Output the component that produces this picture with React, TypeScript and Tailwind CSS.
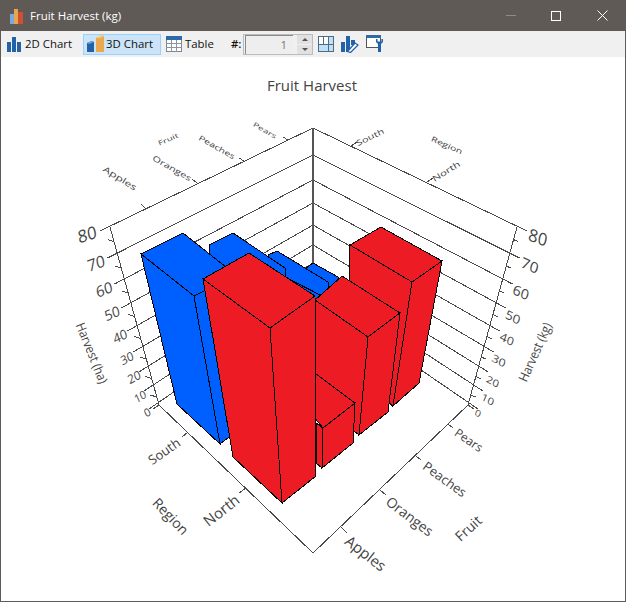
import React from "react";

const font = '"Open Sans", "Noto Sans", sans-serif';

// y of each value (0..80) on the back corner and on the front edges of the walls
const backY = [296, 280, 263, 245, 225, 203, 180, 155, 128];
const sideY = [405, 387, 368, 348, 327, 304, 280, 254, 227];
const leftX = (y: number) => 110 + ((y - 227) * 49) / 178;
const rightX = (y: number) => 517 - ((y - 227) * 49) / 178;

interface Label {
  text: string;
  x: number;
  y: number;
  rotate: number;
  size: number;
  scaleX?: number;
  scaleY?: number;
  skew?: number;
}

const chartLabels: Label[] = [
  // left values
  { text: "80", x: 87, y: 234, rotate: -18, size: 17, skew: -8 },
  { text: "70", x: 96, y: 263, rotate: -20, size: 16, skew: -8 },
  { text: "60", x: 104, y: 289, rotate: -22, size: 15, skew: -8 },
  { text: "50", x: 112, y: 313, rotate: -24, size: 14, skew: -8 },
  { text: "40", x: 120, y: 336, rotate: -26, size: 13, skew: -8 },
  { text: "30", x: 127, y: 358, rotate: -28, size: 12, skew: -8 },
  { text: "20", x: 134, y: 377, rotate: -30, size: 12, skew: -8 },
  { text: "10", x: 140, y: 396, rotate: -32, size: 11, skew: -8 },
  { text: "0", x: 147, y: 412, rotate: -35, size: 11, skew: -8 },
  // right values
  { text: "80", x: 538, y: 237, rotate: 20, size: 17, skew: 8 },
  { text: "70", x: 530, y: 265, rotate: 24, size: 16, skew: 8, scaleY: 0.9 },
  { text: "60", x: 521, y: 292, rotate: 25, size: 15, skew: 8, scaleY: 0.9 },
  { text: "50", x: 513, y: 317, rotate: 26, size: 14, skew: 8, scaleY: 0.85 },
  { text: "40", x: 507, y: 339, rotate: 27, size: 13, skew: 8, scaleY: 0.85 },
  { text: "30", x: 499, y: 360, rotate: 28, size: 13, skew: 8, scaleY: 0.8 },
  { text: "20", x: 493, y: 381, rotate: 29, size: 12, skew: 8, scaleY: 0.8 },
  { text: "10", x: 488, y: 399, rotate: 30, size: 12, skew: 8, scaleY: 0.8 },
  { text: "0", x: 478, y: 413, rotate: 32, size: 11, skew: 8, scaleY: 0.8 },
  // wall titles
  { text: "Harvest (ha)", x: 92, y: 353, rotate: 68, size: 13, scaleX: 0.88 },
  { text: "Harvest (kg)", x: 535, y: 352, rotate: -66, size: 13, scaleX: 0.88 },
  // floor
  { text: "South", x: 164, y: 451, rotate: -35, size: 13 },
  { text: "North", x: 221, y: 510, rotate: -38, size: 15 },
  { text: "Region", x: 171, y: 516, rotate: 46, size: 14 },
  { text: "Pears", x: 469, y: 440, rotate: 35, size: 12 },
  { text: "Peaches", x: 445, y: 479, rotate: 36, size: 13 },
  { text: "Oranges", x: 410, y: 516, rotate: 37, size: 14 },
  { text: "Apples", x: 366, y: 553, rotate: 38, size: 15 },
  { text: "Fruit", x: 468, y: 528, rotate: -42, size: 14 },
  // far side of the floor
  { text: "Apples", x: 120, y: 178, rotate: 32, size: 12, scaleY: 0.7 },
  { text: "Oranges", x: 172, y: 168, rotate: 30, size: 11, scaleY: 0.7 },
  { text: "Fruit", x: 168, y: 139, rotate: -24, size: 10, scaleY: 0.65 },
  { text: "Peaches", x: 217, y: 147, rotate: 30, size: 10.5, scaleY: 0.7 },
  { text: "Pears", x: 265, y: 130, rotate: 30, size: 10, scaleY: 0.65 },
  { text: "South", x: 370, y: 137, rotate: -26, size: 11, scaleY: 0.7 },
  { text: "Region", x: 447, y: 145, rotate: 24, size: 10.5, scaleY: 0.7 },
  { text: "North", x: 446, y: 171, rotate: -32, size: 11.5, scaleY: 0.7 },
];

const ticks = [
  [145, 208, 141, 204], [197, 183, 192, 179], [244, 161, 239, 158], [288, 140, 283, 137],
  [351, 146, 357, 142], [427, 182, 433, 178],
  [188, 432, 182, 437], [246, 488, 239, 493],
  [448, 424, 453, 428], [416, 456, 421, 460], [380, 490, 386, 495], [341, 527, 347, 533],
  [468, 405, 474, 409], [159, 405, 153, 409],
];

// each bar: visible faces, painted back to front
const blueBars = [
  ["306,268 313,263 338,277 338,300 306,300"],
  ["268,255 277,251 328,282 328,300 268,300"],
  ["209,245 233,233 285,268 285,277 330,300 240,320 209,280"],
  ["141,254 183,233 236,275 194,296", "141,254 194,296 220,444 177,404", "194,296 236,275 252,420 220,444"],
];

const redBars = [
  ["350,245 381,227 442,261 412,282", "350,245 412,282 393,406 389,403 349,330", "412,282 442,261 419,383 393,406"],
  ["315,300 342,276 400,313 368,337", "315,300 368,337 359,435 316,400", "368,337 400,313 388,412 359,435"],
  ["300,400 315,373 355,403 323,428", "316,423 323,428 322,468 316,463", "323,428 355,403 353,443 322,468"],
  ["203,279 249,253 315,296 270,328", "203,279 270,328 282,503 233,457", "270,328 315,296 316,476 282,503"],
];

const Chart = () => {
  return (
    <svg width="624" height="544" viewBox="1 57 624 544" className="block">
      <text x="312" y="91" textAnchor="middle" fontSize="15" fill="#444" fontFamily={font}>
        Fruit Harvest
      </text>

      {/* walls */}
      <g stroke="#4a4a4a" strokeWidth="1" fill="none" shapeRendering="crispEdges">
        {sideY.map((y, i) => (
          <g key={i}>
            <line x1="313" y1={backY[i]} x2={leftX(y) - 10} y2={y + 4} />
            <line x1="313" y1={backY[i]} x2={rightX(y) + 10} y2={y + 4} />
          </g>
        ))}
        {sideY.slice(0, -1).map((y, i) => {
          const mid = (y + sideY[i + 1]) / 2;
          return (
            <g key={i}>
              <line x1={leftX(mid) - 6} y1={mid - 1} x2={leftX(mid)} y2={mid + 1} />
              <line x1={rightX(mid)} y1={mid - 1} x2={rightX(mid) + 5} y2={mid + 1} />
            </g>
          );
        })}
        <line x1="110" y1="227" x2="159" y2="405" />
        <line x1="517" y1="227" x2="468" y2="405" />
        <line x1="159" y1="405" x2="313" y2="553" />
        <line x1="468" y1="405" x2="313" y2="553" />
        {ticks.map(([x1, y1, x2, y2], i) => (
          <line key={i} x1={x1} y1={y1} x2={x2} y2={y2} />
        ))}
      </g>
      <line x1="313" y1="128" x2="313" y2="296" stroke="#555" strokeWidth="2" />

      {/* bars */}
      <g stroke="#000" strokeWidth="1" shapeRendering="crispEdges">
        {blueBars.map((faces, i) => (
          <g key={i} fill="#0060ff">
            {faces.map((p) => (
              <polygon key={p} points={p} />
            ))}
          </g>
        ))}
        {redBars.map((faces, i) => (
          <g key={i} fill="#ed1c24">
            {faces.map((p) => (
              <polygon key={p} points={p} />
            ))}
          </g>
        ))}
      </g>

      {/* axis text */}
      {chartLabels.map((l, i) => (
        <text
          key={i}
          textAnchor="middle"
          dominantBaseline="central"
          fontSize={l.size}
          fill="#444"
          fontFamily={font}
          transform={`translate(${l.x} ${l.y}) rotate(${l.rotate}) skewX(${l.skew ?? 0}) scale(${l.scaleX ?? 1} ${l.scaleY ?? 1})`}
        >
          {l.text}
        </text>
      ))}
    </svg>
  );
};

const AppIcon = () => (
  <svg width="16" height="16" viewBox="0 0 16 16" className="mr-[6px] ml-[8px]">
    <rect x="2" y="6" width="4" height="10" fill="#7ba7dc" />
    <rect x="6" y="1" width="4" height="15" fill="#e6a74c" />
    <rect x="10" y="4" width="5" height="12" fill="#cf4f33" />
  </svg>
);

const Icon2D = () => (
  <svg width="16" height="16" viewBox="0 0 16 16">
    <rect x="0" y="6" width="4" height="10" fill="#2162a8" />
    <rect x="5" y="1" width="4" height="15" fill="#2162a8" />
    <rect x="10" y="6" width="4" height="10" fill="#2162a8" />
  </svg>
);

const Icon3D = () => (
  <svg width="18" height="18" viewBox="0 0 18 18">
    <polygon points="0,8 5,6 7,7 7,17 0,17" fill="#2162a8" />
    <polygon points="0,8 5,6 7,7 2,9" fill="#6fa3d8" />
    <polygon points="9,3 14,0 17,1 17,17 9,17" fill="#eba94e" />
    <polygon points="9,3 14,0 17,1 13,3" fill="#f4cf93" />
  </svg>
);

const IconTable = () => (
  <svg width="16" height="16" viewBox="0 0 16 16">
    <rect x="0.5" y="0.5" width="15" height="15" fill="#fff" stroke="#7b8794" />
    <rect x="0" y="0" width="16" height="4" fill="#2f6aa8" />
    <path d="M5.5 4v12M10.5 4v12M0 7.5h16M0 11.5h16" stroke="#8c949c" fill="none" />
  </svg>
);

const IconGrid = () => (
  <svg width="16" height="16" viewBox="0 0 16 16">
    <rect x="0.5" y="0.5" width="15" height="15" fill="#fff" stroke="#4d6b85" />
    <rect x="1" y="8" width="14" height="7" fill="#bfe0f5" />
    <rect x="10" y="1" width="5" height="7" fill="#bfe0f5" />
    <path d="M5.5 1v7M10.5 1v14M1 8.5h14" stroke="#4d6b85" fill="none" />
  </svg>
);

const IconEdit = () => (
  <svg width="18" height="18" viewBox="0 0 18 18">
    <rect x="0" y="7" width="4" height="10" fill="#2162a8" />
    <rect x="5" y="1" width="4" height="16" fill="#2162a8" />
    <rect x="10" y="5" width="4" height="5" fill="#2162a8" />
    <path d="M6.5 16.5 L14 8 L17 10 L9.5 17.5 Z" fill="#fff" stroke="#2162a8" strokeWidth="1.3" />
  </svg>
);

const IconSettings = () => (
  <svg width="18" height="18" viewBox="0 0 18 18">
    <rect x="0.5" y="0.5" width="14" height="12" fill="#fff" stroke="#555" />
    <rect x="0" y="0" width="15" height="3" fill="#2f6aa8" />
    <path d="M10 4 v3 l2 2 v8 h3 v-8 l2 -2 V4 h-1.5 v2.5 h-4 V4 Z" fill="#2162a8" />
  </svg>
);

const Toolbar = () => (
  <div className="h-[26px] bg-[#f0f0f0] flex items-center text-[11.4px] text-[#111]">
    <div className="flex items-center gap-[2px] ml-[6px] w-[76px] shrink-0">
      <Icon2D />
      <span>2D Chart</span>
    </div>
    <div className="flex items-center gap-px w-[78px] h-[21px] pl-[3px] shrink-0 bg-[#cce4f7] border border-[#99d1ff]">
      <Icon3D />
      <span>3D Chart</span>
    </div>
    <div className="flex items-center gap-[3px] ml-[5px] w-[65px] shrink-0">
      <IconTable />
      <span>Table</span>
    </div>
    <span className="font-semibold w-[12px] shrink-0">#:</span>
    <div className="flex items-center h-[21px] w-[70px] shrink-0 border border-[#bcbcbc] bg-[#f0f0f0]">
      <div className="w-[49px] h-[19px] border-t border-l border-[#8a8a8a] bg-[#eeeeee] flex items-center justify-end pr-[6px] text-[#777] mr-[2px] ml-px">
        1
      </div>
      <div className="flex flex-col gap-px ml-[2px]">
        <div className="w-[15px] h-[9px] bg-[#e1e1e1] flex items-center justify-center">
          <div className="border-x-[3px] border-x-transparent border-b-[3px] border-b-[#555]" />
        </div>
        <div className="w-[15px] h-[9px] bg-[#e1e1e1] flex items-center justify-center">
          <div className="border-x-[3px] border-x-transparent border-t-[3px] border-t-[#555]" />
        </div>
      </div>
    </div>
    <div className="flex items-center gap-[7px] ml-[5px]">
      <IconGrid />
      <IconEdit />
      <IconSettings />
    </div>
  </div>
);

const TitleBar = () => (
  <div className="h-[31px] bg-[#5f5a55] flex items-center text-white text-[11.5px]">
    <AppIcon />
    <span>Fruit Harvest (kg)</span>
    <div className="ml-auto flex items-center">
      <div className="w-[10px] h-px bg-[#8f8b87] mr-[35px]" />
      <div className="w-[10px] h-[10px] border border-white mr-[36px]" />
      <svg width="11" height="11" viewBox="0 0 11 11" className="mr-[18px]">
        <path d="M0.5 0.5 L10.5 10.5 M10.5 0.5 L0.5 10.5" stroke="#fff" strokeWidth="1" />
      </svg>
    </div>
  </div>
);

export default function App() {
  return (
    <div className="w-[626px] h-[602px] flex flex-col overflow-hidden" style={{ fontFamily: font }}>
      <TitleBar />
      <div className="flex-1 flex flex-col border-x border-b border-[#5f5a55] bg-white">
        <Toolbar />
        <Chart />
      </div>
    </div>
  );
}
